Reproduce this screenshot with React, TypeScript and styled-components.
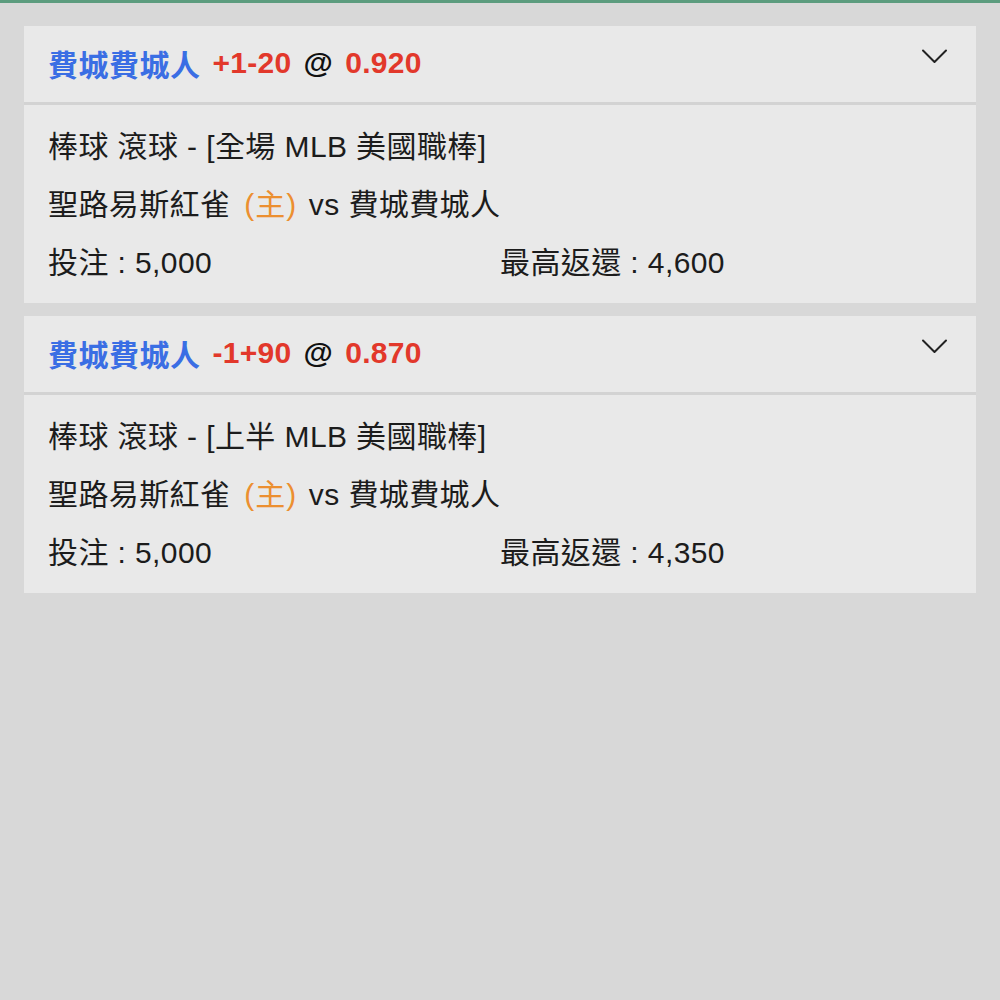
import React from 'react';
import styled, { createGlobalStyle } from 'styled-components';

const GlobalStyle = createGlobalStyle`
  html, body {
    margin: 0;
    padding: 0;
    background: #d8d8d8;
  }
  body {
    font-family: "Liberation Sans", "Noto Sans CJK TC", sans-serif;
    color: #1c1c1c;
  }
`;

const Page = styled.div`
  min-height: 1000px;
  border-top: 3px solid #5c9c7e;
  padding: 23px 24px 0 24px;
  display: flex;
  flex-direction: column;
  gap: 13px;
`;

const Card = styled.div`
  background: #e9e9e9;
  display: flex;
  flex-direction: column;
`;

const Header = styled.div`
  height: 76px;
  display: flex;
  align-items: center;
  justify-content: space-between;
  padding: 0 28px 0 24px;
  border-bottom: 3px solid #d3d3d3;
  font-size: 30px;
  font-weight: 700;
`;

const Title = styled.div`
  display: flex;
  align-items: center;
  gap: 12px;
  margin-top: -2px;
`;

const Team = styled.span`
  color: #3a6ee4;
  letter-spacing: 0.5px;
`;

const Odds = styled.span<{ $dark?: boolean }>`
  color: ${(p) => (p.$dark ? '#111' : '#e2382b')};
  letter-spacing: 0.3px;
`;

const Chevron = styled.svg`
  width: 27px;
  height: 17px;
  margin-top: -16px;
`;

const Body = styled.div`
  padding: 13px 24px 11px 24px;
  font-size: 30px;
  line-height: 58px;
  letter-spacing: 0.4px;
`;

const Line = styled.div`
  white-space: nowrap;
`;

const Home = styled.span`
  color: #ec8f30;
  margin: 0 3px 0 5px;
  letter-spacing: 1px;
`;

const Stakes = styled.div`
  display: grid;
  grid-template-columns: 1fr 1fr;
`;

interface Bet {
  team: string;
  line: string;
  price: string;
  market: string;
  stake: string;
  payout: string;
}

const bets: Bet[] = [
  { team: '費城費城人', line: '+1-20', price: '0.920', market: '全場', stake: '5,000', payout: '4,600' },
  { team: '費城費城人', line: '-1+90', price: '0.870', market: '上半', stake: '5,000', payout: '4,350' },
];

const BetCard = ({ bet }: { bet: Bet }) => (
  <Card>
    <Header>
      <Title>
        <Team>{bet.team}</Team>
        <Odds>{bet.line}</Odds>
        <Odds $dark>@</Odds>
        <Odds>{bet.price}</Odds>
      </Title>
      <Chevron viewBox="0 0 27 17" fill="none">
        <path d="M2 2.5 L13.5 14 L25 2.5" stroke="#222" strokeWidth="2" strokeLinecap="round" strokeLinejoin="round" />
      </Chevron>
    </Header>
    <Body>
      <Line>棒球 滾球 - [{bet.market} MLB 美國職棒]</Line>
      <Line>
        聖路易斯紅雀 <Home>(主)</Home> vs 費城費城人
      </Line>
      <Stakes>
        <Line>投注 : {bet.stake}</Line>
        <Line>最高返還 : {bet.payout}</Line>
      </Stakes>
    </Body>
  </Card>
);

export default function App() {
  return (
    <>
      <GlobalStyle />
      <Page>
        {bets.map((b, i) => (
          <BetCard key={i} bet={b} />
        ))}
      </Page>
    </>
  );
}
